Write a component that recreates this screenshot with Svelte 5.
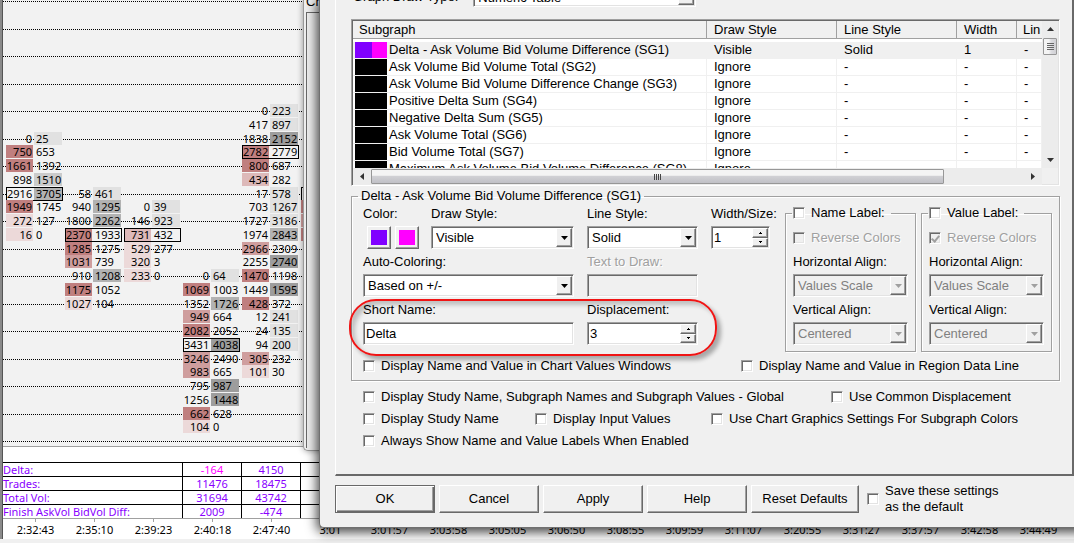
<script lang="ts">
  type Cell = [bid: string, ask: string, style?: string];

  // style string: bid shade (r1-r4), ask shade (g1-g4), "box" for the point of control
  const bars: { start: number; cells: Cell[] }[] = [
    {
      start: 2,
      cells: [
        ["0", "25", "g1"], ["750", "653", "r4"], ["1661", "1392", "r4"], ["898", "1510", "g2"],
        ["2916", "3705", "g3 box"], ["1949", "1745", "r4"], ["272", "127", "r1"], ["16", "0", "r1"],
      ],
    },
    {
      start: 6,
      cells: [
        ["58", "461", "g1"], ["940", "1295", "g3"], ["1800", "2262", "g3"], ["2370", "1933", "r4 box"],
        ["1285", "1275", "r4"], ["1031", "739", "r3"], ["910", "1208", "g3"], ["1175", "1052", "r4"],
        ["1027", "104", "r1"],
      ],
    },
    {
      start: 7,
      cells: [
        ["0", "39", "g1"], ["146", "923", "g1"], ["731", "432", "r2 box"], ["529", "277", "r1"],
        ["320", "3", "r1"], ["233", "0", "r1"],
      ],
    },
    {
      start: 12,
      cells: [
        ["0", "64", "g1"], ["1069", "1003", "r4"], ["1352", "1726", "g3"], ["949", "664", "r3"],
        ["2082", "2052", "r4"], ["3431", "4038", "g4 box"], ["3246", "2490", "r3"], ["983", "665", "r3"],
        ["795", "987", "g4"], ["1256", "1448", "g4"], ["662", "628", "r4"], ["104", "0", "r1"],
      ],
    },
    {
      start: 0,
      cells: [
        ["0", "223", "g1"], ["417", "897", "g1"], ["1838", "2152", "g4"], ["2782", "2779", "r4 box"],
        ["800", "687", "r4"], ["434", "282", "r2"], ["17", "578", "g1"], ["703", "1267", "g1"],
        ["1727", "3186", "g1"], ["1974", "2843", "g3"], ["2966", "2309", "r3"], ["2255", "2740", "g4"],
        ["1470", "1198", "r4"], ["1449", "1595", "g4"], ["428", "372", "r4"], ["12", "241", "g1"],
        ["24", "135", "g1"], ["94", "200", "g1"], ["305", "232", "r3"], ["101", "30", "r1"],
      ],
    },
    { start: 6, cells: [["", "", "box"], ["", "", "r4"], ["", "", "r3"], ["", "", "r4"]] },
  ];

  const stats = [
    ["Delta:", "-164", "4150"],
    ["Trades:", "11476", "18475"],
    ["Total Vol:", "31694", "43742"],
    ["Finish AskVol BidVol Diff:", "2009", "-474"],
  ];

  const times = [
    "2:32:43", "2:35:10", "2:39:23", "2:40:18", "2:47:40", "3:01", "3:01:57", "3:03:58", "3:05:05",
    "3:06:50", "3:08:55", "3:09:59", "3:11:07", "3:20:55", "3:31:27", "3:37:57", "3:42:58", "3:44:49",
  ];

  const subgraphs = [
    ["Delta - Ask Volume Bid Volume Difference (SG1)", "Visible", "Solid", "1"],
    ["Ask Volume Bid Volume Total (SG2)", "Ignore", "-", "-"],
    ["Ask Volume Bid Volume Difference Change (SG3)", "Ignore", "-", "-"],
    ["Positive Delta Sum (SG4)", "Ignore", "-", "-"],
    ["Negative Delta Sum (SG5)", "Ignore", "-", "-"],
    ["Ask Volume Total (SG6)", "Ignore", "-", "-"],
    ["Bid Volume Total (SG7)", "Ignore", "-", "-"],
    ["Maximum Ask Volume Bid Volume Difference (SG8)", "Ignore", "-", "-"],
  ];

  const labelBoxes = [
    { id: "name", title: "Name Label:", reverse: false },
    { id: "value", title: "Value Label:", reverse: true },
  ];
</script>

{#snippet dropdown(id: string, value: string, disabled = false)}
  <div class="dropdown">
    <select {id} {disabled} class="sunken"><option>{value}</option></select>
    <span class="drop raised" class:off={disabled}>
      <svg width="7" height="4" viewBox="0 0 7 4"><path d="M0 0h7L3.5 4z" /></svg>
    </span>
  </div>
{/snippet}

{#snippet spinner(id: string, value: string)}
  <div class="spinner sunken">
    <input {id} type="text" {value} />
    <div class="arrows">
      <button class="raised" aria-label="Increase"><svg width="3" height="2" viewBox="0 0 3 2"><path d="M1 0h1v1h1v1H0V1h1z" /></svg></button>
      <button class="raised" aria-label="Decrease"><svg width="3" height="2" viewBox="0 0 3 2"><path d="M0 0h3v1H2v1H1V1H0z" /></svg></button>
    </div>
  </div>
{/snippet}

{#snippet check(text: string, checked = false, disabled = false)}
  <label class="check" class:disabled>
    <input type="checkbox" {checked} {disabled} /><span>{text}</span>
  </label>
{/snippet}

<div class="desktop">
  <main class="chart">
    <div class="plot">
      <div class="bars">
        {#each bars as bar, col}
          {#each bar.cells as [bid, ask, style], i}
            <div class="cell {style ?? ''}" style="grid-column: {col + 1}; grid-row: {bar.start + i + 8}">
              <span class="bid">{bid}</span><span class="ask">{ask}</span>
            </div>
          {/each}
        {/each}
      </div>
    </div>

    <table class="stats">
      <tbody>
        {#each stats as [name, first, second]}
          <tr>
            <th>{name}</th>
            <td class:negative={name === "Delta:"}>{first}</td>
            <td>{second}</td>
            <td class="rest"></td>
          </tr>
        {/each}
      </tbody>
    </table>

    <div class="axis">
      {#each times as time}
        <span>{time}</span>
      {/each}
    </div>
  </main>

  <div class="window back">
    <div class="title">Ch</div>
    <div class="client"></div>
  </div>

  <section class="window dialog">
    <div class="panel">
      <div class="draw-type">
        <label for="draw-type">Graph Draw Type:</label>
        {@render dropdown("draw-type", "Numeric Table")}
      </div>

      <div class="list sunken">
        <div class="list-view">
          <table>
            <thead>
              <tr><th>Subgraph</th><th>Draw Style</th><th>Line Style</th><th>Width</th><th>Lin</th></tr>
            </thead>
            <tbody>
              {#each subgraphs as [name, draw, line, width], i}
                <tr class:selected={i === 0}>
                  <td><div class="name"><i class="swatch"></i>{name}</div></td>
                  <td>{draw}</td>
                  <td>{line}</td>
                  <td>{width}</td>
                  <td>-</td>
                </tr>
              {/each}
            </tbody>
          </table>
        </div>
        <div class="vbar">
          <svg width="7" height="4" viewBox="0 0 7 4"><path d="M0 4h7L3.5 0z" /></svg>
          <div class="thumb"><i></i><i></i><i></i><i></i></div>
          <svg width="7" height="4" viewBox="0 0 7 4"><path d="M0 0h7L3.5 4z" /></svg>
        </div>
        <div class="hbar">
          <svg width="4" height="7" viewBox="0 0 4 7"><path d="M4 0v7L0 3.5z" /></svg>
          <div class="thumb"><i></i><i></i><i></i><i></i></div>
          <svg width="4" height="7" viewBox="0 0 4 7"><path d="M0 0v7l4-3.5z" /></svg>
        </div>
      </div>

      <fieldset class="subgraph">
        <legend>Delta - Ask Volume Bid Volume Difference (SG1)</legend>
        <div class="settings">
          <div class="fields">
            <div class="field color">
              <span>Color:</span>
              <div class="colors">
                <button class="raised violet" aria-label="Primary color"></button>
                <button class="raised magenta" aria-label="Secondary color"></button>
              </div>
            </div>
            <div class="field">
              <label for="draw-style">Draw Style:</label>
              {@render dropdown("draw-style", "Visible")}
            </div>
            <div class="field">
              <label for="line-style">Line Style:</label>
              {@render dropdown("line-style", "Solid")}
            </div>
            <div class="field">
              <label for="size">Width/Size:</label>
              {@render spinner("size", "1")}
            </div>
            <div class="field wide">
              <label for="auto-coloring">Auto-Coloring:</label>
              {@render dropdown("auto-coloring", "Based on +/-")}
            </div>
            <div class="field disabled">
              <label for="draw-text">Text to Draw:</label>
              <input id="draw-text" class="text sunken" type="text" disabled />
            </div>
            <div class="field wide new-row">
              <label for="short-name">Short Name:</label>
              <input id="short-name" class="text sunken" type="text" value="Delta" />
            </div>
            <div class="field">
              <label for="displacement">Displacement:</label>
              {@render spinner("displacement", "3")}
            </div>
            <div class="highlight"></div>
          </div>

          {#each labelBoxes as box}
            <fieldset class="label-box">
              <legend>{@render check(box.title)}</legend>
              {@render check("Reverse Colors", box.reverse, true)}
              <div class="field">
                <label for="{box.id}-h">Horizontal Align:</label>
                {@render dropdown(box.id + "-h", "Values Scale", true)}
              </div>
              <div class="field">
                <label for="{box.id}-v">Vertical Align:</label>
                {@render dropdown(box.id + "-v", "Centered", true)}
              </div>
            </fieldset>
          {/each}
        </div>
        <div class="split">
          {@render check("Display Name and Value in Chart Values Windows")}
          {@render check("Display Name and Value in Region Data Line")}
        </div>
      </fieldset>

      <div class="options">
        <div class="line first">
          {@render check("Display Study Name, Subgraph Names and Subgraph Values - Global")}
          {@render check("Use Common Displacement")}
        </div>
        <div class="line second">
          {@render check("Display Study Name")}
          {@render check("Display Input Values")}
          {@render check("Use Chart Graphics Settings For Subgraph Colors")}
        </div>
        <div class="line">
          {@render check("Always Show Name and Value Labels When Enabled")}
        </div>
      </div>
    </div>

    <div class="footer">
      <button class="action raised default">OK</button>
      <button class="action raised">Cancel</button>
      <button class="action raised">Apply</button>
      <button class="action raised">Help</button>
      <button class="action raised reset">Reset Defaults</button>
      <label class="check save">
        <input type="checkbox" /><span>Save these settings<br />as the default</span>
      </label>
    </div>
  </section>
</div>

<style>
  :global(body) {
    margin: 0;
    background: #f0f0f0;
  }

  .desktop {
    position: relative;
    min-height: 100vh;
    overflow: hidden;
    font: 13px/16px "Liberation Sans", Arial, sans-serif;
    color: #000;
  }

  .desktop * {
    box-sizing: border-box;
  }

  /* chart */
  .chart {
    border-left: 2px solid #8a8a8a;
    box-shadow: inset 1px 0 #555;
    padding-left: 1px;
    font: 11px/14px "Noto Sans", "Open Sans", sans-serif;
  }

  .plot {
    padding: 8px 3px 12px;
    border-bottom: 1px solid #a0a0a0;
    background:
      repeating-linear-gradient(90deg, transparent 0 1px, #f2f2f2 1px 2px),
      linear-gradient(#f2f2f2 1px, #000 1px 2px, #f2f2f2 2px 29px, #000 29px 30px, #f2f2f2 30px) 0 0 / 100% 55px;
  }

  .bars {
    display: grid;
    grid-template-columns: repeat(6, 59px);
    grid-template-rows: repeat(7, 14px 13px 14px 14px) 14px 13px 14px;
  }

  .cell {
    display: flex;
    gap: 1px;
    width: 57px;
    line-height: 13px;
  }

  .cell span {
    height: 13px;
  }

  .bid {
    width: 27px;
    padding-right: 1px;
    text-align: right;
  }

  .ask {
    width: 28px;
    padding-left: 2px;
  }

  .r1 .bid { background: #ecd9d9; }
  .r2 .bid { background: #ddb9b9; }
  .r3 .bid { background: #cf9e9e; }
  .r4 .bid { background: #c07f7f; }
  .g1 .ask { background: #e1e1e1; }
  .g2 .ask { background: #cbcbcb; }
  .g3 .ask { background: #b2b2b2; }
  .g4 .ask { background: #9d9d9d; }

  .box {
    height: 14px;
    background: #f2f2f2;
    box-shadow: inset 0 0 0 1px #000;
  }

  .box span {
    margin: 1px 0;
    height: 12px;
    line-height: 11px;
  }

  .box .bid {
    width: 26px;
    margin-left: 1px;
  }

  .stats {
    width: 100%;
    padding-top: 15px;
    border-spacing: 0;
    table-layout: fixed;
    background: #fff;
    color: #8a00ff;
    border-bottom: 1px solid #a0a0a0;
  }

  .stats th,
  .stats td {
    height: 14px;
    padding: 0;
    border-top: 1px solid #000;
    line-height: 13px;
    font-weight: normal;
    text-align: center;
  }

  .stats th {
    width: 179px;
    text-align: left;
  }

  .stats td {
    width: 59px;
    border-left: 1px solid #000;
  }

  .stats .rest {
    width: auto;
  }

  .stats .negative {
    color: #f0f;
  }

  .axis {
    display: flex;
    height: 20px;
    padding-left: 3px;
    background: #fff;
  }

  .axis span {
    flex: 0 0 59px;
    padding-top: 4px;
    text-align: center;
    background: linear-gradient(#a0a0a0, #a0a0a0) 29px 0 / 1px 3px no-repeat;
  }

  /* windows */
  .window {
    position: absolute;
    background: #f0f0f0;
    border-bottom-left-radius: 5px;
  }

  .back {
    top: 0;
    left: 303px;
    right: 0;
    height: 451px;
    padding-left: 2px;
    border: solid #9a9a9a;
    border-width: 0 0 1px 1px;
    box-shadow: 0 0 6px rgba(0, 0, 0, 0.4);
    overflow: hidden;
  }

  .back .title {
    height: 12px;
    line-height: 4px;
  }

  .back .client {
    height: 436px;
    border: solid #696969;
    border-width: 1px 0 0 1px;
  }

  .dialog {
    top: 0;
    left: 319px;
    right: -15px;
    padding: 0 15px 14px;
    border: solid #707070;
    border-width: 0 0 1px 1px;
    box-shadow: 0 2px 12px 2px rgba(0, 0, 0, 0.75);
  }

  .panel {
    padding: 0 12px 25px 15px;
    border-left: 1px solid #fff;
    border-right: 2px solid #696969;
    border-bottom: 2px solid #696969;
  }

  /* sunken and raised edges shared by all controls */
  .sunken {
    border: 1px solid;
    border-color: #a0a0a0 #fff #fff #a0a0a0;
    border-radius: 0;
    box-shadow: inset 1px 1px #696969, inset -1px -1px #e3e3e3;
    background: #fff;
  }

  .raised {
    border: 1px solid;
    border-color: #fff #696969 #696969 #fff;
    border-radius: 0;
    box-shadow: inset -1px -1px #a0a0a0;
    background: #f0f0f0;
  }

  select,
  input,
  button {
    margin: 0;
    font: inherit;
    color: #000;
  }

  .draw-type {
    display: flex;
    gap: 15px;
    height: 23px;
    margin: -16px 0 12px 2px;
    line-height: 26px;
  }

  .draw-type .dropdown {
    width: 223px;
  }

  .draw-type select {
    padding-top: 3px;
  }

  .dropdown {
    position: relative;
    height: 23px;
  }

  .dropdown select {
    display: block;
    appearance: none;
    width: 100%;
    height: 23px;
    padding: 0 18px 0 4px;
    opacity: 1;
  }

  .dropdown select:disabled,
  .text:disabled {
    background: #f0f0f0;
    color: #808080;
  }

  .drop {
    position: absolute;
    top: 2px;
    right: 2px;
    bottom: 2px;
    width: 16px;
    display: grid;
    place-items: center;
    pointer-events: none;
  }

  svg {
    display: block;
  }

  .off svg {
    fill: #a0a0a0;
  }

  .spinner {
    display: flex;
    height: 23px;
    padding: 1px;
  }

  .spinner input {
    flex: 1;
    min-width: 0;
    padding: 0 1px;
    border: 0;
    background: none;
    outline: 0;
  }

  .arrows {
    display: flex;
    flex-direction: column;
    width: 16px;
  }

  .arrows button {
    flex: 1;
    display: grid;
    place-items: center;
    padding: 0;
  }

  .text {
    display: block;
    width: 100%;
    height: 23px;
    padding: 0 2px;
  }

  /* subgraph list */
  .list {
    display: grid;
    grid-template: 147px 17px / 1fr 16px;
    padding: 1px 1px 0;
    background: #f0f0f0;
  }

  .list-view {
    overflow: hidden;
    background: #fff;
  }

  .list table {
    width: 100%;
    min-width: 689px;
    border-spacing: 0;
    table-layout: fixed;
  }

  .list th {
    height: 18px;
    padding: 0 6px;
    border: solid #a0a0a0;
    border-width: 0 1px 1px 0;
    background: #f0f0f0;
    font-weight: normal;
    text-align: left;
    white-space: nowrap;
  }

  .list th:nth-child(1) { width: 354px; }
  .list th:nth-child(2) { width: 130px; padding-left: 7px; }
  .list th:nth-child(3) { width: 120px; padding-left: 7px; }
  .list th:nth-child(4) { width: 60px; padding-left: 7px; }

  .list th:last-child {
    padding-right: 0;
    border-right: 0;
  }

  .list tbody::before {
    content: "";
    display: block;
    height: 3px;
  }

  .list td {
    height: 17px;
    padding: 0 7px;
    border: solid #f0f0f0;
    border-width: 0 1px 1px 0;
    white-space: nowrap;
  }

  .list td:first-child {
    padding: 0 0 0 2px;
  }

  .selected td {
    background: #f0f0f0;
  }

  .name {
    display: flex;
    gap: 2px;
  }

  .swatch {
    width: 32px;
    background: #000;
  }

  .selected .swatch {
    background: linear-gradient(90deg, #8000ff 17px, #f0f 17px);
  }

  .vbar,
  .hbar {
    display: flex;
    align-items: center;
    background: #ececec;
    fill: #333;
  }

  .vbar {
    flex-direction: column;
    padding: 6px 0;
  }

  .vbar .thumb {
    width: 14px;
    height: 17px;
    margin: 7px 0 auto;
  }

  .hbar {
    padding: 0 7px;
  }

  .hbar .thumb {
    width: 573px;
    height: 15px;
    margin: 0 auto 0 7px;
  }

  .thumb {
    display: flex;
    align-items: center;
    justify-content: center;
    gap: 1px;
    border: 1px solid #979797;
    border-radius: 1px;
    background: linear-gradient(#f4f4f4 40%, #d0d0d4 50%, #c0c0c6);
  }

  .vbar .thumb {
    flex-direction: column;
    background: linear-gradient(90deg, #f4f4f4 40%, #dcdce0 60%, #d0d0d4);
  }

  .hbar .thumb i {
    width: 1px;
    height: 6px;
    background: #444;
  }

  .vbar .thumb i {
    width: 7px;
    height: 1px;
    background: #666;
  }

  /* group boxes */
  fieldset {
    min-width: 0;
    margin: 0;
    border: 1px solid #a0a0a0;
    box-shadow: 1px 1px #fff, inset 1px 1px #fff;
  }

  .subgraph {
    margin-top: 2px;
    padding: 1px 7px 6px 11px;
  }

  .subgraph > legend {
    margin-left: -5px;
    padding: 0 3px;
  }

  .settings {
    display: flex;
    align-items: flex-start;
    gap: 5px;
  }

  .fields {
    position: relative;
    display: grid;
    grid-template-columns: 55px 143px 111px 59px;
    gap: 5px 13px;
    padding-top: 1px;
    margin-right: auto;
  }

  .field {
    display: flex;
    flex-direction: column;
    gap: 4px;
    white-space: nowrap;
  }

  .wide {
    grid-column: span 2;
  }

  .new-row {
    grid-column: 1 / span 2;
  }

  .colors {
    display: flex;
    gap: 4px;
    padding-left: 4px;
  }

  .colors button {
    flex: none;
    width: 24px;
    height: 23px;
    padding: 3px;
    background-clip: content-box;
  }

  .violet {
    background-color: #8000ff;
  }

  .magenta {
    background-color: #f0f;
  }

  .disabled {
    color: #a0a0a0;
    text-shadow: 1px 1px #fff;
  }

  .label-box {
    width: 131px;
    padding: 9px 7px 6px;
  }

  .label-box legend {
    margin-left: -1px;
    padding: 0 6px 0 1px;
  }

  .label-box .field {
    margin-top: 8px;
  }

  .label-box .field + .field {
    margin-top: 5px;
  }

  .check {
    display: flex;
    align-items: center;
    gap: 6px;
    white-space: nowrap;
  }

  .check input {
    appearance: none;
    flex: none;
    width: 12px;
    height: 12px;
    border: 1px solid;
    border-color: #a0a0a0 #fff #fff #a0a0a0;
    box-shadow: inset 1px 1px #696969, inset -1px -1px #e3e3e3;
    background: #fff;
  }

  .check input:disabled {
    background: #f0f0f0;
  }

  .check input:checked::after {
    content: "";
    display: block;
    width: 3px;
    height: 6px;
    margin: 1px 0 0 3px;
    border: solid #a0a0a0;
    border-width: 0 2px 2px 0;
    transform: rotate(40deg);
  }

  .split {
    display: grid;
    grid-template-columns: 378px 1fr;
    padding-top: 6px;
  }

  .options {
    display: flex;
    flex-direction: column;
    gap: 6px;
    padding: 8px 0 0 12px;
  }

  .line {
    display: grid;
  }

  .first {
    grid-template-columns: 468px 1fr;
  }

  .second {
    grid-template-columns: 172px 176px 1fr;
  }

  .footer {
    display: flex;
    gap: 4px;
    padding-top: 9px;
  }

  .action {
    width: 100px;
    height: 28px;
    padding: 0;
  }

  .default {
    border-color: #696969;
    box-shadow: inset 1px 1px #fff, inset -1px -1px #696969, inset -2px -2px #a0a0a0;
  }

  .reset {
    width: 108px;
  }

  .save {
    height: 28px;
    padding-left: 4px;
  }

  /* red marker drawn over the short name and displacement row */
  .highlight {
    position: absolute;
    left: -14px;
    right: 53px;
    bottom: -11px;
    height: 57px;
    border: 2px solid #f01414;
    border-radius: 27px;
    box-shadow: 4px 4px 4px rgba(0, 0, 0, 0.3), inset 4px 4px 4px rgba(0, 0, 0, 0.2);
    pointer-events: none;
  }
</style>
